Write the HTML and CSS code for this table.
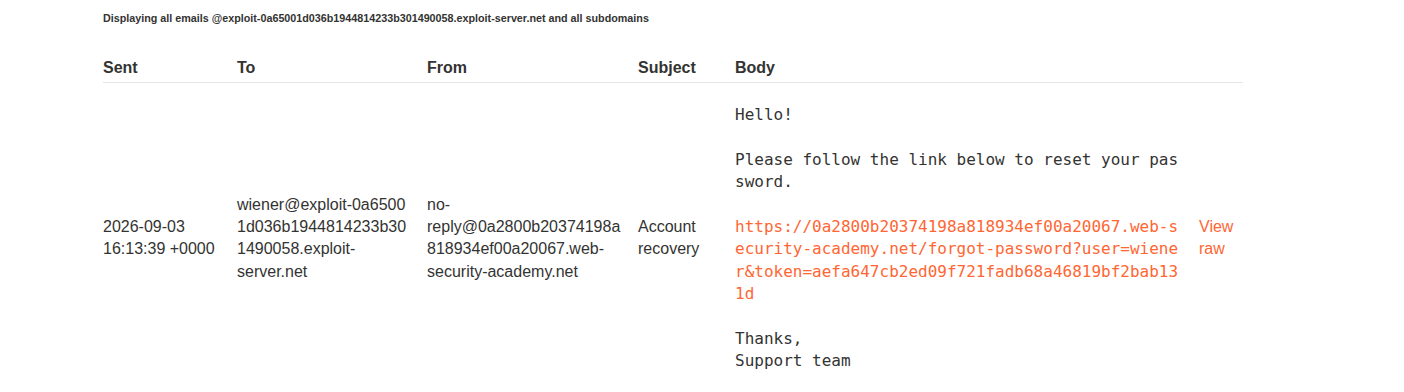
FILE: index.html
```html
<!DOCTYPE html>
<html lang="en">
<head>
  <meta charset="UTF-8" />
  <title>Exploit Server: Email client</title>
  <link rel="stylesheet" href="styles.css">
</head>
<body>

<div class="container">
  <h4 class="inbox-note">Displaying all emails @exploit-0a65001d036b1944814233b301490058.exploit-server.net and all subdomains</h4>

  <table class="emails">
    <colgroup>
      <col class="col-sent">
      <col class="col-to">
      <col class="col-from">
      <col class="col-subject">
      <col class="col-body">
      <col class="col-raw">
    </colgroup>
    <thead>
      <tr>
        <th>Sent</th>
        <th>To</th>
        <th>From</th>
        <th>Subject</th>
        <th>Body</th>
        <th></th>
      </tr>
    </thead>
    <tbody>
      <tr>
        <td>2026-09-03 16:13:39 +0000</td>
        <!-- word joiner keeps "exploit-0a65..." together like the original wrap -->
        <td>wiener@exploit-&#8288;0a65001d036b1944814233b301490058.exploit-server.net</td>
        <td>no-reply@0a2800b20374198a818934ef00a20067.web-security-academy.net</td>
        <td>Account recovery</td>
        <td><pre class="email-body">Hello!

Please follow the link below to reset your password.

<a href="#">https://0a2800b20374198a818934ef00a20067.web-security-academy.net/forgot-password?user=wiener&amp;token=aefa647cb2ed09f721fadb68a46819bf2bab131d</a>

Thanks,
Support team</pre></td>
        <td><a href="#">View raw</a></td>
      </tr>
    </tbody>
  </table>
</div>

</body>
</html>
```

FILE: styles.css
```css
:root {
  --text: #333332;
  --link: #ff6633;
  --line: #e6e6e6;
}

* { box-sizing: border-box; }

body {
  margin: 0;
  font-family: 'Liberation Sans', Arial, sans-serif;
  font-size: 16px;
  color: var(--text);
  background: #fff;
}

a {
  color: var(--link);
  text-decoration: none;
}

.container {
  padding: 12px 0 0 103px;
}

.inbox-note {
  font-size: 10.75px;
  font-weight: 700;
  line-height: 13px;
  margin: 0 0 34px;
}

.emails {
  width: 1140px;
  table-layout: fixed;
  border-collapse: collapse;
}

.col-sent { width: 134px; }
.col-to { width: 190px; }
.col-from { width: 211px; }
.col-subject { width: 97px; }
.col-body { width: 464px; }
.col-raw { width: 44px; }

.emails th {
  text-align: left;
  font-weight: 700;
  line-height: 18px;
  padding: 0 16px 5px 0;
  border-bottom: 1px solid var(--line);
}

.emails td {
  vertical-align: middle;
  line-height: 22.4px;
  padding: 0 16px 0 0;
  overflow-wrap: anywhere;
}

.emails td:last-child,
.emails th:last-child {
  padding-right: 0;
}

.email-body {
  margin: 21px 0;
  font-family: 'DejaVu Sans Mono', monospace;
  font-size: 16px;
  line-height: 22.4px;
  white-space: pre-wrap;
  word-break: break-all;
}
```
